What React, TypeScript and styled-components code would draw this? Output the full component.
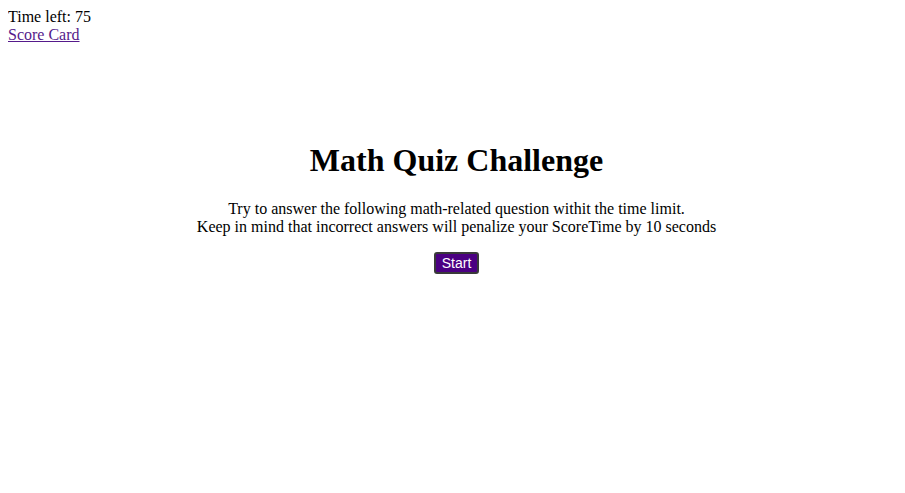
import React from "react";
import styled, { createGlobalStyle } from "styled-components";

const GlobalStyle = createGlobalStyle`
  body {
    margin: 8px;
    font-family: "Liberation Serif", "Times New Roman", serif;
    font-size: 16px;
    color: #000;
    background: #fff;
  }
`;

const TopBar = styled.header`
  display: flex;
  flex-direction: column;
  align-items: flex-start;
  line-height: 18px;
`;

const ScoreLink = styled.a`
  color: #551a8b;
  text-decoration: underline;
`;

const Main = styled.main`
  display: flex;
  flex-direction: column;
  align-items: center;
  padding: 98px 0 0 8px;
  text-align: center;
`;

const Title = styled.h1`
  margin: 0 0 21px;
  font-size: 32px;
  font-weight: bold;
  line-height: 37px;
`;

const Intro = styled.p`
  margin: 0 0 16px;
  line-height: 18px;
`;

const StartButton = styled.button`
  background: #4b0082;
  color: #fff;
  border: 2px solid #3a3a3a;
  border-radius: 3px;
  font-family: "Liberation Sans", Arial, sans-serif;
  font-size: 14px;
  line-height: 16px;
  padding: 1px 6px;
  cursor: pointer;
`;

export default function App() {
  return (
    <>
      <GlobalStyle />
      <TopBar>
        <span>Time left: 75</span>
        <ScoreLink href="#">Score Card</ScoreLink>
      </TopBar>
      <Main>
        <Title>Math Quiz Challenge</Title>
        <Intro>
          Try to answer the following math-related question withit the time limit.
          <br />
          Keep in mind that incorrect answers will penalize your ScoreTime by 10 seconds
        </Intro>
        <StartButton>Start</StartButton>
      </Main>
    </>
  );
}
